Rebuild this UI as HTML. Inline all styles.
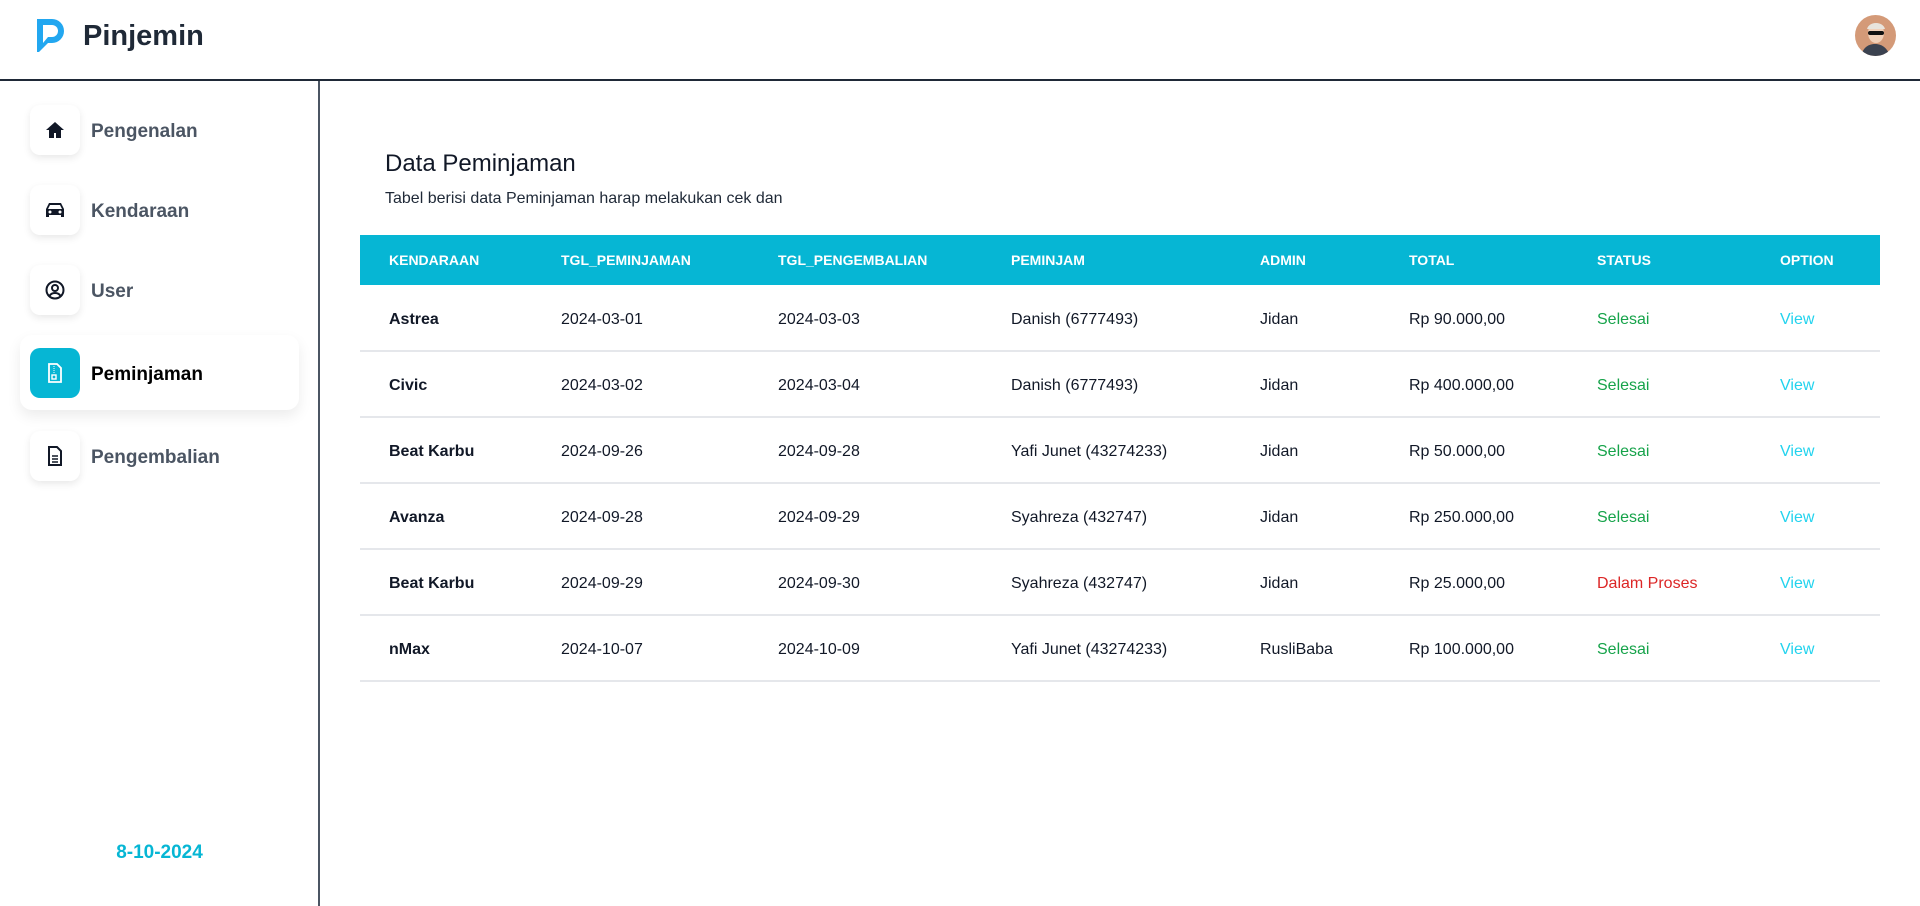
<!DOCTYPE html>
<html><head><meta charset="utf-8"><style>
*{box-sizing:border-box;margin:0;padding:0}
body{width:1920px;height:906px;background:#fff;font-family:"Liberation Sans",sans-serif;position:relative;overflow:hidden;color:#111827}
.hdr{position:absolute;left:0;top:0;width:1920px;height:81px;border-bottom:2px solid #1f2937}
.logo{position:absolute;left:83px;top:20px;font-size:29px;font-weight:700;color:#1f2937}
.av{position:absolute;left:1855px;top:15px;width:41px;height:41px;border-radius:50%;background:#d49a78;overflow:hidden}
.side{position:absolute;left:318px;top:81px;width:2px;height:825px;background:#4b5563}
.item{position:absolute;left:30px;width:270px;height:50px}
.box{position:absolute;left:0;top:0;width:50px;height:50px;border-radius:10px;background:#fff;box-shadow:0 3px 8px rgba(0,0,0,.09);display:flex;align-items:center;justify-content:center}
.lbl{position:absolute;left:61px;top:16px;font-size:19px;font-weight:700;color:#4b5563}
.active{position:absolute;left:20px;top:335px;width:279px;height:75px;border-radius:12px;background:#fff;box-shadow:0 6px 14px rgba(0,0,0,.08)}
.date{position:absolute;left:0;width:319px;top:842px;text-align:center;color:#06b6d4;font-weight:700;font-size:19px}
h1{position:absolute;left:385px;top:150px;font-size:24px;font-weight:400;color:#111827}
.sub{position:absolute;left:385px;top:190px;font-size:16px;color:#1f2937}
table{position:absolute;left:360px;top:235px;width:1520px;border-collapse:collapse}
th{background:#06b6d4;color:#fff;font-size:14px;font-weight:700;text-align:left;height:50px;padding:0}
td{height:66px;font-size:16px;padding:4px 0 0;border-bottom:2px solid #e5e7eb;color:#111827}
td.b{font-weight:700}
.g{color:#16a34a}.r{color:#dc2626}.v{color:#22d3ee}
</style></head><body>
<div class="hdr">
<svg style="position:absolute;left:35px;top:17px" width="31" height="36" viewBox="0 0 31 36"><path d="M2 2h15a12 12 0 0 1 0 24h-4l-9 9H2z" fill="#22a7f0"/><path d="M8 8h9a6 6 0 0 1 0 12H8z" fill="#fff"/><path d="M8 20h5l-5 6z" fill="#fff"/></svg>
<div class="logo">Pinjemin</div>
<div class="av"><svg width="41" height="41" viewBox="0 0 41 41"><path d="M6 41c2-9 8-12 14-12s12 3 15 12z" fill="#3b4250"/><ellipse cx="21" cy="18" rx="8" ry="10" fill="#f1d0b8"/><path d="M12 14c2-8 16-8 18 0" fill="#e8e4dc"/><rect x="13" y="16" width="16" height="4" rx="2" fill="#111"/></svg></div>
</div>
<div class="side"></div>
<div class="active"></div>
<div class="item" style="top:105px"><div class="box"><svg width="20" height="18" viewBox="0 0 20 18"><path d="M10 1L1 9h3v8h5v-5h2v5h5V9h3z" fill="#111827"/></svg></div><div class="lbl">Pengenalan</div></div>
<div class="item" style="top:185px"><div class="box"><svg width="22" height="18" viewBox="0 0 22 18"><path d="M5 2h12l3 6v8h-3v-2H5v2H2V8z" fill="#111827"/><path d="M6 4h10l2 4H4z" fill="#fff"/><circle cx="6" cy="11" r="1.5" fill="#fff"/><circle cx="16" cy="11" r="1.5" fill="#fff"/></svg></div><div class="lbl">Kendaraan</div></div>
<div class="item" style="top:265px"><div class="box"><svg width="20" height="20" viewBox="0 0 20 20"><circle cx="10" cy="10" r="8.5" fill="none" stroke="#111827" stroke-width="2"/><circle cx="10" cy="8" r="3" fill="none" stroke="#111827" stroke-width="2"/><path d="M4.5 16a6 5 0 0 1 11 0" fill="none" stroke="#111827" stroke-width="2"/></svg></div><div class="lbl">User</div></div>
<div class="item" style="top:348px"><div class="box" style="background:#06b6d4;box-shadow:none"><svg width="16" height="20" viewBox="0 0 16 20"><path d="M2 1h8l4 4v14H2z" fill="none" stroke="#fff" stroke-width="1.8"/><rect x="5" y="12" width="4" height="4" fill="none" stroke="#fff" stroke-width="1.4"/><path d="M7 3v8" stroke="#fff" stroke-dasharray="1 1"/></svg></div><div class="lbl" style="color:#000">Peminjaman</div></div>
<div class="item" style="top:431px"><div class="box"><svg width="16" height="20" viewBox="0 0 16 20"><path d="M2 1h8l4 4v14H2z" fill="none" stroke="#111827" stroke-width="2"/><path d="M5 10h6M5 13h6M5 16h6" stroke="#111827" stroke-width="1.6"/></svg></div><div class="lbl">Pengembalian</div></div>
<div class="date">8-10-2024</div>
<h1>Data Peminjaman</h1>
<div class="sub">Tabel berisi data Peminjaman harap melakukan cek dan</div>
<table>
<colgroup><col style="width:29px"><col style="width:172px"><col style="width:217px"><col style="width:233px"><col style="width:249px"><col style="width:149px"><col style="width:188px"><col style="width:183px"><col></colgroup>
<tr><th></th><th>KENDARAAN</th><th>TGL_PEMINJAMAN</th><th>TGL_PENGEMBALIAN</th><th>PEMINJAM</th><th>ADMIN</th><th>TOTAL</th><th>STATUS</th><th>OPTION</th></tr>
<tr><td></td><td class="b">Astrea</td><td>2024-03-01</td><td>2024-03-03</td><td>Danish (6777493)</td><td>Jidan</td><td>Rp 90.000,00</td><td class="g">Selesai</td><td class="v">View</td></tr>
<tr><td></td><td class="b">Civic</td><td>2024-03-02</td><td>2024-03-04</td><td>Danish (6777493)</td><td>Jidan</td><td>Rp 400.000,00</td><td class="g">Selesai</td><td class="v">View</td></tr>
<tr><td></td><td class="b">Beat Karbu</td><td>2024-09-26</td><td>2024-09-28</td><td>Yafi Junet (43274233)</td><td>Jidan</td><td>Rp 50.000,00</td><td class="g">Selesai</td><td class="v">View</td></tr>
<tr><td></td><td class="b">Avanza</td><td>2024-09-28</td><td>2024-09-29</td><td>Syahreza (432747)</td><td>Jidan</td><td>Rp 250.000,00</td><td class="g">Selesai</td><td class="v">View</td></tr>
<tr><td></td><td class="b">Beat Karbu</td><td>2024-09-29</td><td>2024-09-30</td><td>Syahreza (432747)</td><td>Jidan</td><td>Rp 25.000,00</td><td class="r">Dalam Proses</td><td class="v">View</td></tr>
<tr><td></td><td class="b">nMax</td><td>2024-10-07</td><td>2024-10-09</td><td>Yafi Junet (43274233)</td><td>RusliBaba</td><td>Rp 100.000,00</td><td class="g">Selesai</td><td class="v">View</td></tr>
</table>
</body></html>
